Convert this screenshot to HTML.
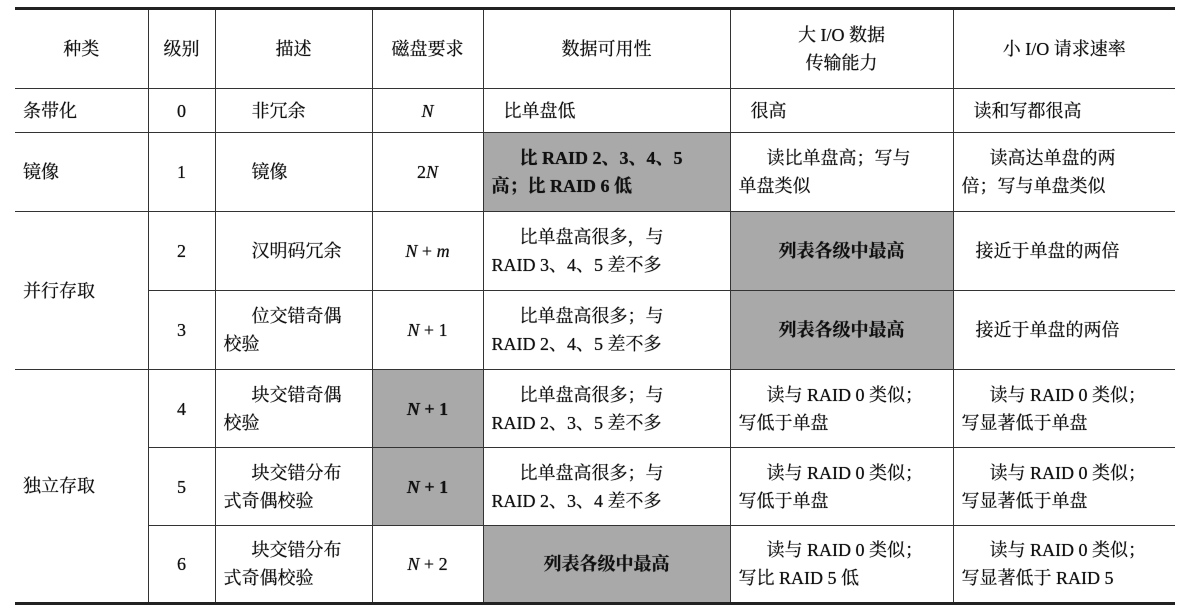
<!DOCTYPE html><html><head><meta charset="utf-8"><style>
body{margin:0;background:#fff;width:1188px;height:610px;overflow:hidden}
table{position:absolute;left:15px;top:7px;border-collapse:collapse;table-layout:fixed;font-family:"Liberation Serif","Noto Serif CJK SC",serif;font-size:18px;color:#111;text-shadow:0 0 0.6px #111}
td{border:1.5px solid #333;padding:0 8px;line-height:28px;vertical-align:middle}
tr.h td{border-top:3px solid #222}
tr.last td,td.bl{border-bottom:3px solid #222}
table tr td:first-child{border-left:none}
table tr td:last-child{border-right:none}
.c{text-align:center}
.g{background:#a9a9a9;font-weight:bold}
i{font-style:italic}
td.ind{text-indent:28px}
</style></head><body>
<table>
<colgroup><col style="width:133px"><col style="width:67px"><col style="width:157px"><col style="width:111px"><col style="width:247px"><col style="width:223px"><col style="width:222px"></colgroup>
<tr class="h" style="height:80px"><td class="c">种类</td><td class="c">级别</td><td class="c">描述</td><td class="c">磁盘要求</td><td class="c">数据可用性</td><td class="c">大 I/O 数据<br>传输能力</td><td class="c">小 I/O 请求速率</td></tr>
<tr style="height:44px"><td>条带化</td><td class="c">0</td><td class="ind">非冗余</td><td class="c"><i>N</i></td><td class="ind" style="text-indent:12px">比单盘低</td><td class="ind" style="text-indent:12px">很高</td><td style="text-indent:12px">读和写都很高</td></tr>
<tr style="height:79px"><td>镜像</td><td class="c">1</td><td class="ind">镜像</td><td class="c">2<i>N</i></td><td class="g ind">比 RAID 2、3、4、5<br><span style="text-indent:0;display:inline-block">高；比 RAID 6 低</span></td><td><span style="padding-left:28px">读比单盘高；写与</span><br>单盘类似</td><td><span style="padding-left:28px">读高达单盘的两</span><br>倍；写与单盘类似</td></tr>
<tr style="height:79px"><td rowspan="2">并行存取</td><td class="c">2</td><td class="ind">汉明码冗余</td><td class="c"><i>N</i> + <i>m</i></td><td><span style="padding-left:28px">比单盘高很多，与</span><br>RAID 3、4、5 差不多</td><td class="g c">列表各级中最高</td><td style="padding-left:22px">接近于单盘的两倍</td></tr>
<tr style="height:79px"><td class="c">3</td><td><span style="padding-left:28px">位交错奇偶</span><br>校验</td><td class="c"><i>N</i> + 1</td><td><span style="padding-left:28px">比单盘高很多；与</span><br>RAID 2、4、5 差不多</td><td class="g c">列表各级中最高</td><td style="padding-left:22px">接近于单盘的两倍</td></tr>
<tr style="height:78px"><td rowspan="3" class="bl">独立存取</td><td class="c">4</td><td><span style="padding-left:28px">块交错奇偶</span><br>校验</td><td class="c g"><i>N</i> + 1</td><td><span style="padding-left:28px">比单盘高很多；与</span><br>RAID 2、3、5 差不多</td><td><span style="padding-left:28px">读与 RAID 0 类似；</span><br>写低于单盘</td><td><span style="padding-left:28px">读与 RAID 0 类似；</span><br>写显著低于单盘</td></tr>
<tr style="height:78px"><td class="c">5</td><td><span style="padding-left:28px">块交错分布</span><br>式奇偶校验</td><td class="c g"><i>N</i> + 1</td><td><span style="padding-left:28px">比单盘高很多；与</span><br>RAID 2、3、4 差不多</td><td><span style="padding-left:28px">读与 RAID 0 类似；</span><br>写低于单盘</td><td><span style="padding-left:28px">读与 RAID 0 类似；</span><br>写显著低于单盘</td></tr>
<tr class="last" style="height:78px"><td class="c">6</td><td><span style="padding-left:28px">块交错分布</span><br>式奇偶校验</td><td class="c"><i>N</i> + 2</td><td class="g c">列表各级中最高</td><td><span style="padding-left:28px">读与 RAID 0 类似；</span><br>写比 RAID 5 低</td><td><span style="padding-left:28px">读与 RAID 0 类似；</span><br>写显著低于 RAID 5</td></tr>
</table>
</body></html>
